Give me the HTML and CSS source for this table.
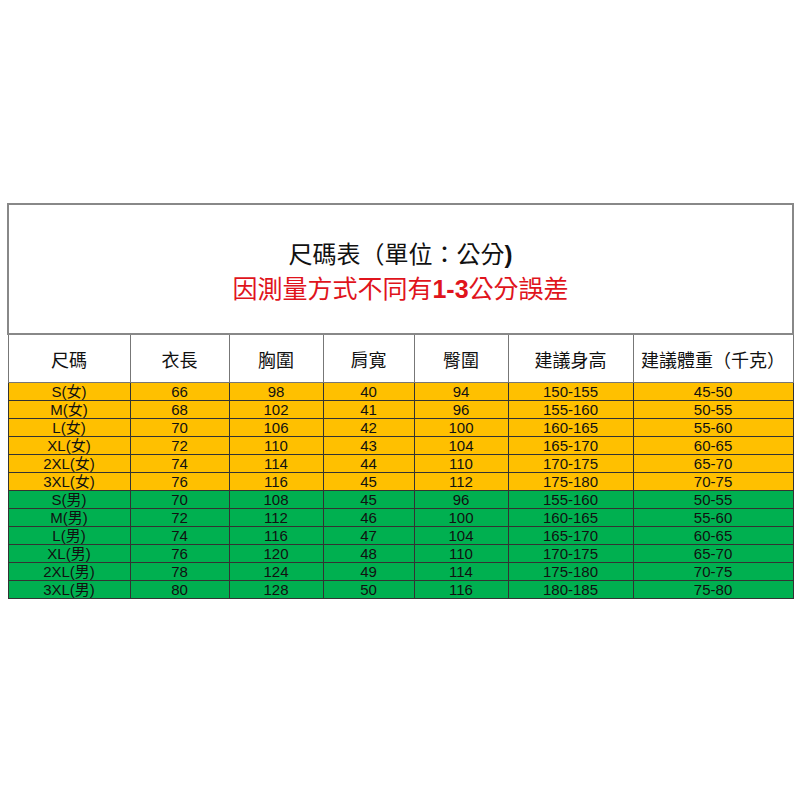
FILE: index.html
```html
<!DOCTYPE html>
<html lang="zh-Hant">
<head>
<meta charset="utf-8">
<link rel="stylesheet" href="styles.css">
</head>
<body>
<div class="sheet">
<table class="size-table">
  <colgroup>
    <col class="c1"><col class="c2"><col class="c3"><col class="c4"><col class="c5"><col class="c6"><col class="c7">
  </colgroup>
  <tr class="title-row">
    <td colspan="7">
      <div class="title">尺碼表（單位：公分<b class="paren">)</b></div>
      <div class="note">因測量方式不同有<b>1-3</b>公分誤差</div>
    </td>
  </tr>
  <tr class="head">
    <td>尺碼</td><td>衣長</td><td>胸圍</td><td>肩寬</td><td>臀圍</td><td>建議身高</td><td>建議體重（千克）</td>
  </tr>
  <tr class="f"><td>S(女)</td><td>66</td><td>98</td><td>40</td><td>94</td><td>150-155</td><td>45-50</td></tr>
  <tr class="f"><td>M(女)</td><td>68</td><td>102</td><td>41</td><td>96</td><td>155-160</td><td>50-55</td></tr>
  <tr class="f"><td>L(女)</td><td>70</td><td>106</td><td>42</td><td>100</td><td>160-165</td><td>55-60</td></tr>
  <tr class="f"><td>XL(女)</td><td>72</td><td>110</td><td>43</td><td>104</td><td>165-170</td><td>60-65</td></tr>
  <tr class="f"><td>2XL(女)</td><td>74</td><td>114</td><td>44</td><td>110</td><td>170-175</td><td>65-70</td></tr>
  <tr class="f"><td>3XL(女)</td><td>76</td><td>116</td><td>45</td><td>112</td><td>175-180</td><td>70-75</td></tr>
  <tr class="m"><td>S(男)</td><td>70</td><td>108</td><td>45</td><td>96</td><td>155-160</td><td>50-55</td></tr>
  <tr class="m"><td>M(男)</td><td>72</td><td>112</td><td>46</td><td>100</td><td>160-165</td><td>55-60</td></tr>
  <tr class="m"><td>L(男)</td><td>74</td><td>116</td><td>47</td><td>104</td><td>165-170</td><td>60-65</td></tr>
  <tr class="m"><td>XL(男)</td><td>76</td><td>120</td><td>48</td><td>110</td><td>170-175</td><td>65-70</td></tr>
  <tr class="m"><td>2XL(男)</td><td>78</td><td>124</td><td>49</td><td>114</td><td>175-180</td><td>70-75</td></tr>
  <tr class="m"><td>3XL(男)</td><td>80</td><td>128</td><td>50</td><td>116</td><td>180-185</td><td>75-80</td></tr>
</table>
</div>
</body>
</html>
```

FILE: styles.css
```css
html, body {
  margin: 0;
  padding: 0;
  background: #fff;
}
.sheet {
  width: 800px;
  height: 800px;
  padding: 203px 0 0 7px;
  box-sizing: border-box;
}
.size-table {
  border-collapse: collapse;
  table-layout: fixed;
  width: 785px;
  font-family: "Liberation Sans", "Noto Sans CJK TC", sans-serif;
  color: #111;
}
.c1 { width: 122px; }
.c2 { width: 99px; }
.c3 { width: 94px; }
.c4 { width: 91px; }
.c5 { width: 94px; }
.c6 { width: 125px; }
.c7 { width: 160px; }
.size-table td {
  border: 1px solid #555;
  padding: 0;
  text-align: center;
  vertical-align: middle;
}
.title-row td {
  height: 122px;
  border: 2px solid #888;
  padding-top: 6px;
}
.title {
  font-family: "Noto Sans CJK TC", sans-serif;
  font-weight: 400;
  font-size: 24px;
  line-height: 30px;
  color: #111;
}
.title .paren {
  font-family: "Liberation Sans", sans-serif;
  font-weight: bold;
}
.note {
  font-family: "Noto Sans CJK TC", sans-serif;
  font-weight: 400;
  font-size: 25px;
  line-height: 34px;
  color: #e0141c;
}
.note b {
  font-family: "Liberation Sans", sans-serif;
  font-weight: bold;
}
.head td {
  height: 47px;
  font-family: "Noto Sans CJK TC", sans-serif;
  font-weight: 400;
  font-size: 18px;
  border-color: #777;
  background: #fff;
}
.f td, .m td {
  height: 17px;
  font-size: 15px;
  line-height: 17px;
  border-color: #333;
}
.f td { background: #ffc000; }
.m td { background: #00b050; }
```
